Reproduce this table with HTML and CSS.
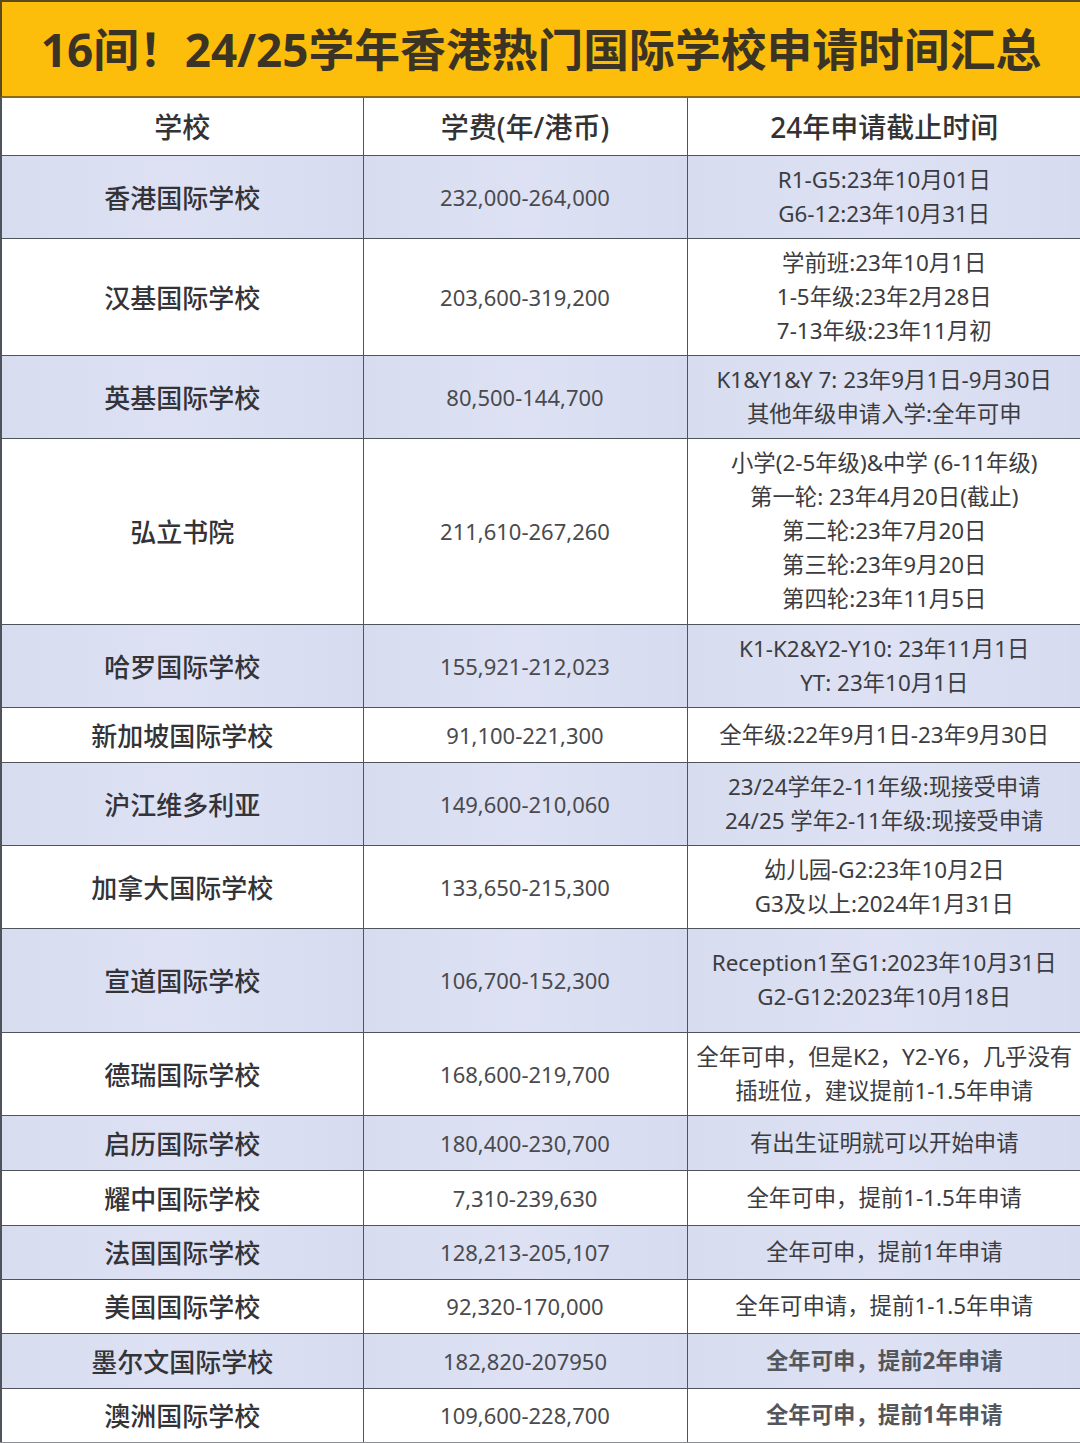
FILE: index.html
```html
<!DOCTYPE html>
<html lang="zh-CN">
<head>
<meta charset="utf-8">
<title>16间！24/25学年香港热门国际学校申请时间汇总</title>
<link rel="stylesheet" href="styles.css">
</head>
<body>
<div class="page">
  <header class="title-bar">
    <h1 class="title">16间！24/25学年香港热门国际学校申请时间汇总</h1>
  </header>
  <table class="schools">
    <colgroup>
      <col class="c-name">
      <col class="c-fee">
      <col class="c-date">
    </colgroup>
    <thead>
      <tr class="head-row">
        <th>学校</th>
        <th>学费(年/港币)</th>
        <th>24年申请截止时间</th>
      </tr>
    </thead>
    <tbody>
      <tr class="tint h2l">
        <td class="name">香港国际学校</td>
        <td class="fee">232,000-264,000</td>
        <td class="date">R1-G5:23年10月01日<br>G6-12:23年10月31日</td>
      </tr>
      <tr class="h3l">
        <td class="name">汉基国际学校</td>
        <td class="fee">203,600-319,200</td>
        <td class="date">学前班:23年10月1日<br>1-5年级:23年2月28日<br>7-13年级:23年11月初</td>
      </tr>
      <tr class="tint h2l">
        <td class="name">英基国际学校</td>
        <td class="fee">80,500-144,700</td>
        <td class="date">K1&amp;Y1&amp;Y 7: 23年9月1日-9月30日<br>其他年级申请入学:全年可申</td>
      </tr>
      <tr class="h5l">
        <td class="name">弘立书院</td>
        <td class="fee">211,610-267,260</td>
        <td class="date">小学(2-5年级)&amp;中学 (6-11年级)<br>第一轮: 23年4月20日(截止)<br>第二轮:23年7月20日<br>第三轮:23年9月20日<br>第四轮:23年11月5日</td>
      </tr>
      <tr class="tint h2l">
        <td class="name">哈罗国际学校</td>
        <td class="fee">155,921-212,023</td>
        <td class="date">K1-K2&amp;Y2-Y10: 23年11月1日<br>YT: 23年10月1日</td>
      </tr>
      <tr class="h1l">
        <td class="name">新加坡国际学校</td>
        <td class="fee">91,100-221,300</td>
        <td class="date">全年级:22年9月1日-23年9月30日</td>
      </tr>
      <tr class="tint h2l">
        <td class="name">沪江维多利亚</td>
        <td class="fee">149,600-210,060</td>
        <td class="date">23/24学年2-11年级:现接受申请<br>24/25 学年2-11年级:现接受申请</td>
      </tr>
      <tr class="h2l">
        <td class="name">加拿大国际学校</td>
        <td class="fee">133,650-215,300</td>
        <td class="date">幼儿园-G2:23年10月2日<br>G3及以上:2024年1月31日</td>
      </tr>
      <tr class="tint h2t">
        <td class="name">宣道国际学校</td>
        <td class="fee">106,700-152,300</td>
        <td class="date">Reception1至G1:2023年10月31日<br>G2-G12:2023年10月18日</td>
      </tr>
      <tr class="h2l">
        <td class="name">德瑞国际学校</td>
        <td class="fee">168,600-219,700</td>
        <td class="date">全年可申，但是K2，Y2-Y6，几乎没有<br>插班位，建议提前1-1.5年申请</td>
      </tr>
      <tr class="tint h1l">
        <td class="name">启历国际学校</td>
        <td class="fee">180,400-230,700</td>
        <td class="date">有出生证明就可以开始申请</td>
      </tr>
      <tr class="h1l">
        <td class="name">耀中国际学校</td>
        <td class="fee">7,310-239,630</td>
        <td class="date">全年可申，提前1-1.5年申请</td>
      </tr>
      <tr class="tint h1s">
        <td class="name">法国国际学校</td>
        <td class="fee">128,213-205,107</td>
        <td class="date">全年可申，提前1年申请</td>
      </tr>
      <tr class="h1s">
        <td class="name">美国国际学校</td>
        <td class="fee">92,320-170,000</td>
        <td class="date">全年可申请，提前1-1.5年申请</td>
      </tr>
      <tr class="tint h1l">
        <td class="name">墨尔文国际学校</td>
        <td class="fee">182,820-207950</td>
        <td class="date heavy">全年可申，提前2年申请</td>
      </tr>
      <tr class="h1l last">
        <td class="name">澳洲国际学校</td>
        <td class="fee">109,600-228,700</td>
        <td class="date heavy">全年可申，提前1年申请</td>
      </tr>
    </tbody>
  </table>
</div>
</body>
</html>
```

FILE: styles.css
```css
html, body {
  margin: 0;
  padding: 0;
  background: #ffffff;
}

.page {
  width: 1080px;
  font-family: "Noto Sans", "Noto Sans CJK SC", sans-serif;
  color: #3a3a3e;
}

.title-bar {
  box-sizing: border-box;
  height: 98px;
  background: #fcbe0b;
  border-top: 2px solid #5b4a1c;
  border-left: 2px solid #5b4a1c;
  border-bottom: 2px solid #8a6a14;
  display: flex;
  align-items: center;
  justify-content: center;
}

.title {
  margin: 0;
  font-family: "Noto Sans", "Noto Sans CJK SC", sans-serif;
  font-size: 45.8px;
  font-weight: 700;
  color: #3b3424;
  letter-spacing: 0;
  line-height: 1;
  padding-top: 2px;
}

.schools {
  width: 1080px;
  border-collapse: collapse;
  table-layout: fixed;
}

.c-name { width: 362px; }
.c-fee { width: 324px; }
.c-date { width: 394px; }

.schools th,
.schools td {
  border: 1.5px solid #4f535c;
  padding: 0;
  text-align: center;
  vertical-align: middle;
}

.schools tr > :last-child {
  border-right: none;
}

.schools tr > :first-child {
  border-left: 2px solid #4f535c;
}

.schools thead th {
  border-top: none;
}

.head-row {
  height: 57px;
}

.head-row th {
  font-family: "Noto Sans", "Noto Sans CJK SC", sans-serif;
  font-size: 28px;
  font-weight: 500;
  color: #333336;
  background: #ffffff;
}

.tint td {
  background: linear-gradient(90deg, #d7dcef 0%, #dde1f3 50%, #d6dbf0 100%);
}

.h1l { height: 55px; }
.h1s { height: 54px; }
.h2l { height: 83px; }
.h2t { height: 104px; }
.h3l { height: 117px; }
.h5l { height: 186px; }

.name {
  font-size: 26px;
  font-weight: 500;
  color: #333338;
}

.fee {
  font-size: 22px;
  font-weight: 400;
  color: #4a4a4e;
}

.date {
  font-size: 22.4px;
  line-height: 34px;
  font-weight: 400;
  color: #3c3c40;
}

.date.heavy {
  font-weight: 700;
  color: #55565c;
}

.last td {
  border-bottom: 2px solid #8c8e94;
}
```
